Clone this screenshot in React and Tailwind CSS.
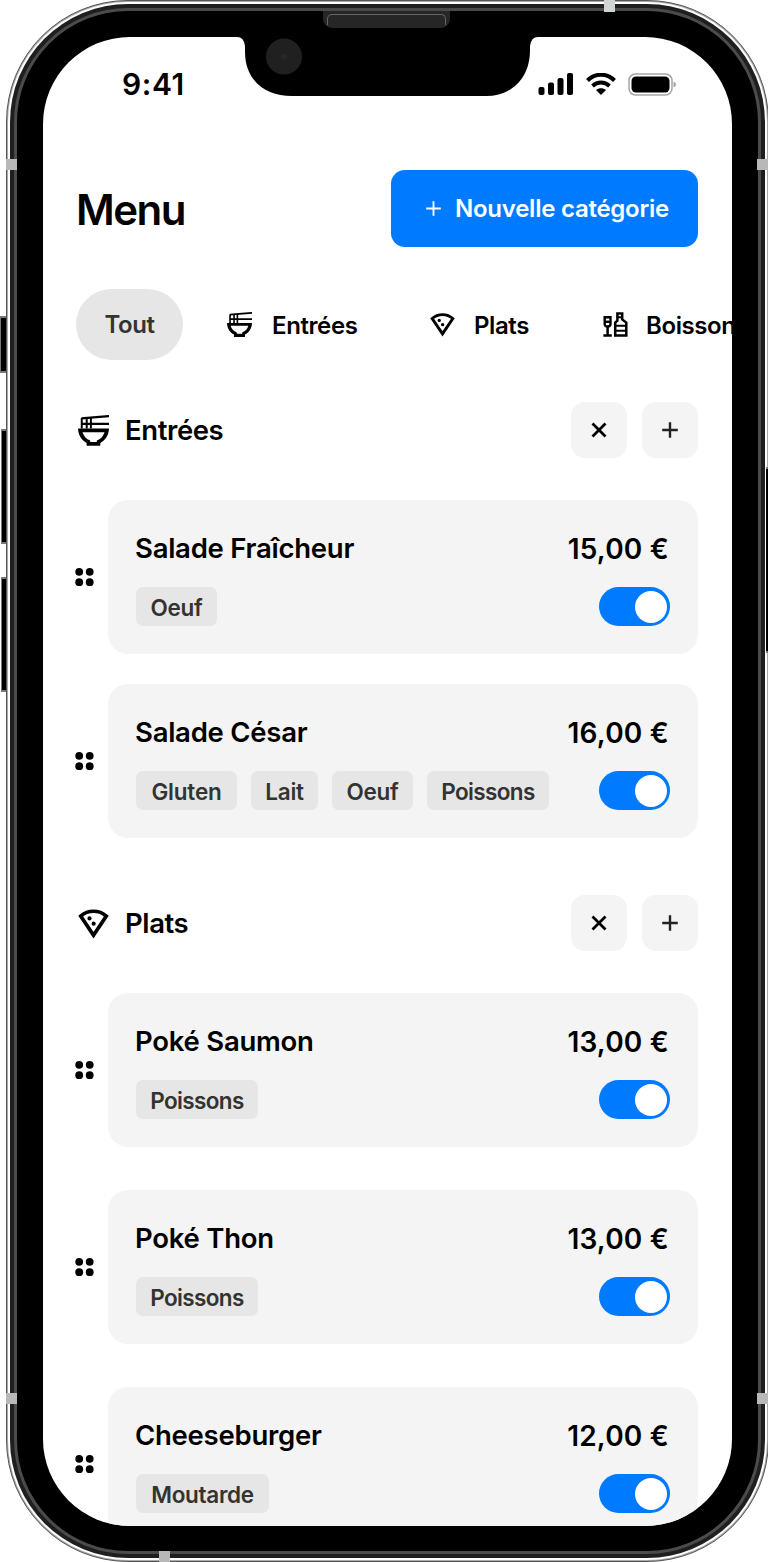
function Ramen({ className }) {
  return (
    <svg viewBox="0 0 31.300 31" className={`shrink-0 ${className}`} fill="none" stroke="currentColor">
      <path d="M3.800 3V13.500M8.800 2.800V13.500M13 2.400V13.500" strokeWidth="2" />
      <path d="M3.500 3.200L31.300.9M3.500 8.900H31.300" strokeWidth="2.200" />
      <path
        d="M0 13.500H31.300C31 20.500 27.500 25.500 22.500 28V31H8.700V28C3.700 25.500.3 20.500 0 13.500ZM4.500 17.200C5.800 21.500 8.500 24 12.300 25.500V27H19V25.500C22.800 24 25.500 21.500 26.800 17.200Z"
        fill="currentColor"
        fillRule="evenodd"
        stroke="none"
      />
    </svg>
  );
}

function Pizza({ className }) {
  return (
    <svg viewBox="0 0 31.300 31" className={`shrink-0 ${className}`}>
      <path d="M2.700 8C10 1.500 21.300 1.500 28.600 8L15.650 27.300Z" fill="none" stroke="currentColor" strokeWidth="3.700" />
      <circle cx="11.600" cy="10.400" r="2.100" />
      <circle cx="15.800" cy="15.700" r="2.100" />
    </svg>
  );
}

function Liquor({ className }) {
  return (
    <svg viewBox="0 0 25 25" className={`shrink-0 ${className}`} fill="none" stroke="currentColor">
      <path d="M1.700 5.300H7.500V12Q7.500 14.500 4.600 14.500Q1.700 14.500 1.700 12Z" strokeWidth="2.400" />
      <path d="M1 9.800H8" strokeWidth="2.400" />
      <path d="M4.600 14.500V23M.4 23.500H8.800" strokeWidth="2.500" />
      <path d="M14.400 1.400H19.200V7.500L23.300 10.600V23.600H12.200V10.600L14.400 8.600Z" strokeWidth="2.500" />
      <path d="M14.400 5.300H19.200M12 13.800H23.300M12 18.800H23.300" strokeWidth="2" />
    </svg>
  );
}

function Glyph({ plus, className }) {
  return (
    <svg viewBox="0 0 16 16" className={className} fill="none" stroke="currentColor">
      <path d={plus ? "M8 .2v15.6M.2 8h15.6" : "M1.5 1.5l13 13M14.5 1.5l-13 13"} />
    </svg>
  );
}

function Grip() {
  return (
    <svg viewBox="0 0 18 18" className="mr-[14px] h-[18px] w-[18px] shrink-0 overflow-visible">
      <circle cx="3.200" cy="3.800" r="3.900" />
      <circle cx="13.700" cy="3.800" r="3.900" />
      <circle cx="3.200" cy="14.200" r="3.900" />
      <circle cx="13.700" cy="14.200" r="3.900" />
    </svg>
  );
}

function Item({ name, price, tags }) {
  return (
    <div className="flex w-[622px] items-center">
      <Grip />
      <div className="h-[154px] flex-1 rounded-[20px] bg-[#f4f4f4] pt-[29px] pr-[28px] pl-[28px]">
        <div className="flex h-[38px] items-center justify-between pt-[2px] pr-px text-[27.5px] font-[570] whitespace-nowrap">
          <span className="ml-[-1px] tracking-[-0.25px]">{name}</span>
          <span className="text-[28px] tracking-[0.2px]">{price}</span>
        </div>
        <div className="mt-[20px] flex h-[39px] items-center gap-[14px]">
          {tags.map(([label, cls]) => (
            <span
              key={label}
              className={`flex h-[39px] items-center justify-center rounded-[7px] bg-[#e6e6e6] pt-[2px] text-[22.5px] font-[560] text-[#333] ${cls}`}
            >
              {label}
            </span>
          ))}
          <span className="ml-auto flex h-[39px] w-[71px] items-center justify-end rounded-full bg-[#007aff] pr-[3px]">
            <span className="h-[32px] w-[32px] rounded-full bg-white" />
          </span>
        </div>
      </div>
    </div>
  );
}

function Section({ icon: Icon, title, children }) {
  return (
    <section>
      <div className="flex h-[56px] w-[622px] items-center">
        <Icon className="ml-[2px] h-[31px] w-[31px]" />
        <h2 className="ml-[16px] pt-[2px] text-[27.5px] font-[570] tracking-[-0.4px]">{title}</h2>
        <button className="ml-auto flex h-[56px] w-[56px] items-center justify-center rounded-[14px] bg-[#f4f4f4]">
          <Glyph className="h-[16px] w-[16px] stroke-[2.8]" />
        </button>
        <button className="ml-[15px] flex h-[56px] w-[56px] items-center justify-center rounded-[14px] bg-[#f4f4f4] text-[#222]">
          <Glyph plus className="h-[16px] w-[16px] stroke-[2.4]" />
        </button>
      </div>
      {children}
    </section>
  );
}

const OEUF = ["Oeuf", "w-[81px] tracking-[-0.3px]"];
const POISSONS = ["Poissons", "w-[122px] tracking-[-0.65px]"];

export default function App() {
  return (
    <div className="relative h-[1562px] w-[768px] overflow-hidden bg-white font-['Inter',sans-serif] text-black">
      <span className="absolute top-[316px] left-0 h-[57px] w-[8px] border-y-2 border-l border-[#777] bg-black" />
      <span className="absolute top-[429px] left-[1px] h-[115px] w-[7px] border-y-2 border-l border-[#777] bg-black" />
      <span className="absolute top-[577px] left-[1px] h-[115px] w-[7px] border-y-2 border-l border-[#777] bg-black" />

      <div className="relative h-[1562px] w-[763px] translate-x-[6px] rounded-[122px] border border-[#555] bg-[#a9aaa9] p-px">
        <div className="h-full rounded-[120px] bg-white p-[2px]">
          <div className="h-full rounded-[118px] bg-[#1f1f1f] p-[4px]">
            <div className="h-full rounded-[114px] border-[3px] border-[#4b4b4b] bg-black px-[26px] pt-[26px] pb-[25px]">
              <div className="h-full w-[689px] overflow-hidden rounded-[87px] bg-white">
                <div className="flex h-[94px] items-center justify-between pr-[56px] pl-[79px]">
                  <span className="text-[30px] font-semibold tracking-[0.6px]">9:41</span>
                  <div className="flex items-center">
                    <svg viewBox="0 0 36 22" className="h-[22px] w-[36px]">
                      <rect x="0.500" y="14" width="6" height="8" rx="2" />
                      <rect x="10" y="9.500" width="6" height="12.500" rx="2" />
                      <rect x="19.500" y="5" width="6" height="17" rx="2" />
                      <rect x="29" y="0" width="6" height="22" rx="2" />
                    </svg>
                    <svg viewBox="0 0 30 22" className="ml-[12px] h-[22px] w-[30px]" fill="none" stroke="black">
                      <path d="M1.500 7.500C9-.2 21-.2 28.500 7.500" strokeWidth="4" />
                      <path d="M6.500 13C11.500 8.300 18.500 8.300 23.500 13" strokeWidth="3.800" />
                      <path d="M10 17C13 14.500 17 14.500 20 17L15 22Z" fill="black" stroke="none" />
                    </svg>
                    <svg viewBox="0 0 48 23" className="ml-[12px] h-[23px] w-[48px]">
                      <rect x="1" y="1" width="43" height="21" rx="6.500" fill="none" stroke="#a6a6a6" strokeWidth="1.500" />
                      <rect x="3.500" y="3.500" width="38" height="16" rx="4.500" />
                      <path d="M45.500 8.500q2.500 1 2.500 3t-2.500 3z" fill="#a6a6a6" />
                    </svg>
                  </div>
                </div>

                <main className="pt-[38px] pl-[33px]">
                  <header className="flex h-[78px] w-[622px] items-center justify-between">
                    <h1 className="pt-[2px] text-[42px] font-semibold tracking-[-1.5px]">Menu</h1>
                    <button className="flex h-[77px] w-[307px] items-center rounded-[14px] bg-[#007aff] pl-[35px] text-[24px] font-[560] tracking-[-0.25px] whitespace-nowrap text-white">
                      <Glyph plus className="mr-[14px] h-[15px] w-[15px] stroke-2" />
                      <span className="pt-[2px]">Nouvelle catégorie</span>
                    </button>
                  </header>

                  <nav className="mt-[42px] flex h-[71px] w-[720px] items-center text-[24px] font-[560] tracking-[-0.4px] whitespace-nowrap">
                    <span className="flex h-[71px] w-[107px] items-center justify-center rounded-full bg-[#e6e6e6] pt-px text-[#333]">Tout</span>
                    <Ramen className="ml-[44px] h-[25px] w-[25px]" />
                    <span className="ml-[20px] w-[86px] pt-[2px]">Entrées</span>
                    <Pizza className="ml-[72px] h-[25px] w-[25px]" />
                    <span className="ml-[19px] w-[56px] pt-[2px]">Plats</span>
                    <Liquor className="ml-[73px] h-[25px] w-[25px]" />
                    <span className="ml-[18px] pt-[2px]">Boissons</span>
                  </nav>

                  <div className="mt-[42px]">
                    <Section icon={Ramen} title="Entrées">
                      <div className="mt-[42px] flex flex-col gap-[30px]">
                        <Item name="Salade Fraîcheur" price="15,00 €" tags={[OEUF]} />
                        <Item
                          name="Salade César"
                          price="16,00 €"
                          tags={[["Gluten", "w-[101px] tracking-[-0.2px]"], ["Lait", "w-[67px] tracking-[-0.2px]"], OEUF, POISSONS]}
                        />
                      </div>
                    </Section>
                  </div>
                  <div className="mt-[57px]">
                    <Section icon={Pizza} title="Plats">
                      <div className="mt-[42px] flex flex-col gap-[43px]">
                        <Item name="Poké Saumon" price="13,00 €" tags={[POISSONS]} />
                        <Item name="Poké Thon" price="13,00 €" tags={[POISSONS]} />
                        <Item name="Cheeseburger" price="12,00 €" tags={[["Moutarde", "w-[133px] tracking-[-0.3px]"]]} />
                      </div>
                    </Section>
                  </div>
                </main>
              </div>
            </div>
          </div>
        </div>
      </div>

      <svg viewBox="0 0 310 64" className="absolute top-[34px] left-[234px] h-[64px] w-[310px]">
        <path d="M0 0H310V3H304Q297 3 296 12V16C296 46 276 62 252 62H58C31 62 11 46 11 18V12Q10 3 3 3H0Z" />
        <circle cx="50" cy="22.500" r="18" fill="#202020" />
        <circle cx="50" cy="22.500" r="3" fill="#282828" />
      </svg>
      <span className="absolute top-[11px] left-[323px] h-[17px] w-[127px] rounded-b-[9px] bg-[#262626]" />
      <span className="absolute top-[14px] left-[327px] h-[11px] w-[119px] rounded-t-[5px] border-t border-x border-[#666]" />
      <span className="absolute top-[159px] left-[6px] h-[11px] w-[11px] bg-[#b8b8b8]" />
      <span className="absolute top-[159px] left-[757px] h-[11px] w-[11px] bg-[#b8b8b8]" />
      <span className="absolute top-[1393px] left-[6px] h-[11px] w-[11px] bg-[#b8b8b8]" />
      <span className="absolute top-[1393px] left-[757px] h-[11px] w-[11px] bg-[#b8b8b8]" />
      <span className="absolute top-[467px] left-[766px] h-[186px] w-[2px] border-y-2 border-[#777] bg-black" />
      <span className="absolute top-0 left-[604px] h-[12px] w-[11px] bg-[#d0d4d2]" />
      <span className="absolute top-[1551px] left-[159px] h-[11px] w-[11px] bg-[#b8b8b8]" />
    </div>
  );
}
